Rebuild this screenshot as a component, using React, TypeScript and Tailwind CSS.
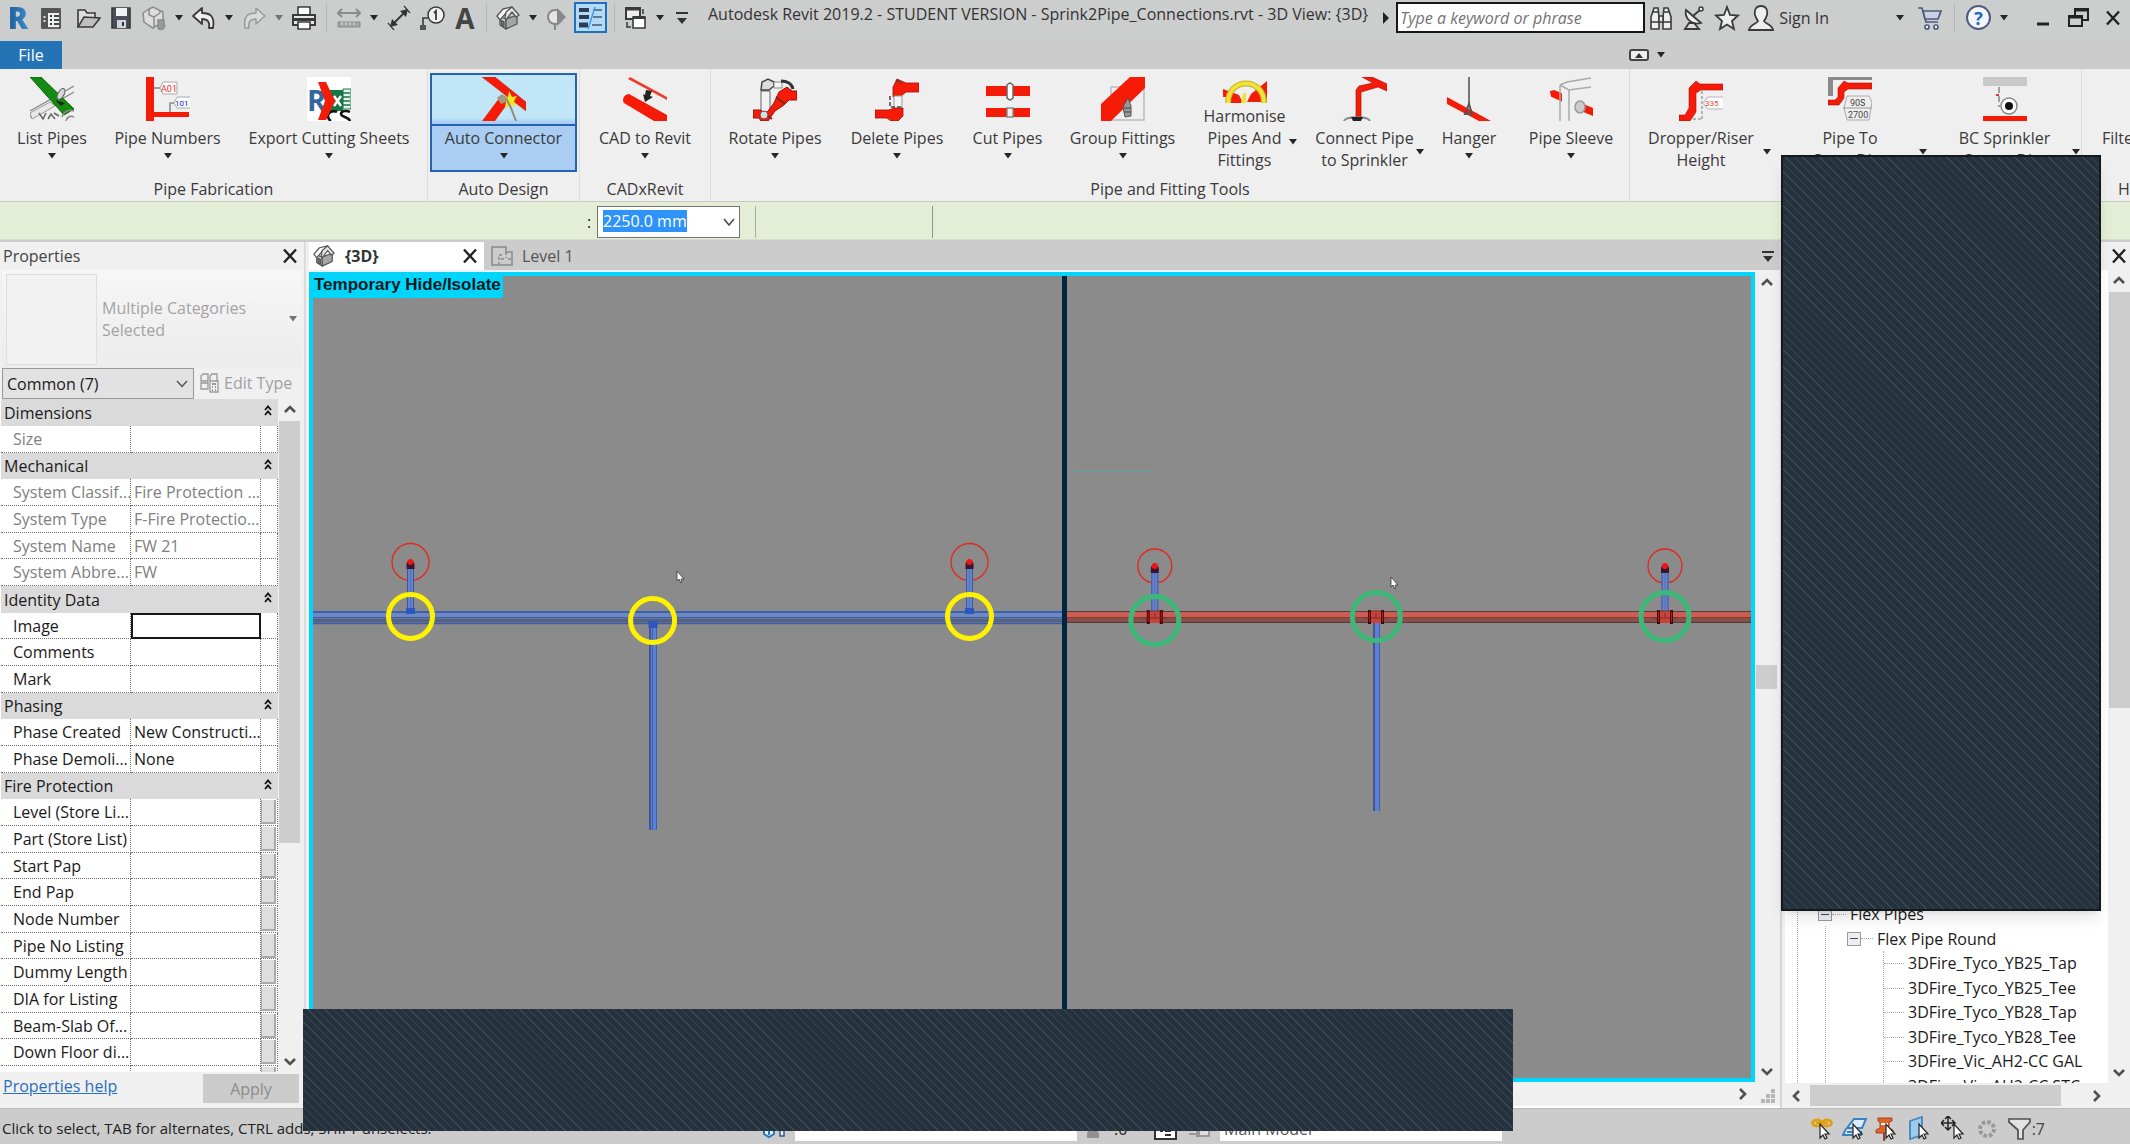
import type { ReactNode } from 'react';

const RED = '#f51b06';

function Caret({ dim = false }: { dim?: boolean }) {
  return (
    <svg width="10" height="6" viewBox="0 0 10 6" className={dim ? 'shrink-0 text-neutral-500' : 'shrink-0 text-neutral-800'}>
      <path d="M1 0h8L5 5.500z" fill="currentColor" />
    </svg>
  );
}

function CaretButton({ label, dim = false }: { label: string; dim?: boolean }) {
  return (
    <button type="button" aria-label={label} className="flex h-8 w-[10px] shrink-0 items-center justify-center">
      <Caret dim={dim} />
    </button>
  );
}

function Tool({ label, children, className = 'w-[26px]' }: { label: string; children: ReactNode; className?: string }) {
  return (
    <button type="button" aria-label={label} className={`flex h-8 shrink-0 items-center justify-center ${className}`}>
      <svg width="26" height="26" viewBox="0 0 26 26" fill="none" stroke="#3a3a3a" strokeWidth="2" className="shrink-0">
        {children}
      </svg>
    </button>
  );
}

function Chevron({ dir }: { dir: 'up' | 'down' | 'left' | 'right' }) {
  const d = { up: 'M2 9l5-5 5 5', down: 'M2 5l5 5 5-5', left: 'M9 2L4 7l5 5', right: 'M5 2l5 5-5 5' }[dir];
  return (
    <svg width="14" height="14" viewBox="0 0 14 14" fill="none" stroke="#505050" strokeWidth="2.600">
      <path d={d} />
    </svg>
  );
}

function ScrollButton({ dir, label }: { dir: 'up' | 'down' | 'left' | 'right'; label: string }) {
  return (
    <button type="button" aria-label={label} className="flex size-[22px] shrink-0 items-center justify-center">
      <Chevron dir={dir} />
    </button>
  );
}

function Cross({ label, className = '' }: { label: string; className?: string }) {
  return (
    <button type="button" aria-label={label} className={`flex size-5 shrink-0 items-center justify-center ${className}`}>
      <svg width="16" height="16" viewBox="0 0 16 16" fill="none" stroke="#222" strokeWidth="2.400">
        <path d="M2 1.500l12 13M14 1.500l-12 13" />
      </svg>
    </button>
  );
}

function House({ size = 24 }: { size?: number }) {
  return (
    <svg width={size} height={size} viewBox="0 0 24 24" stroke="#555" strokeWidth="1.300" strokeLinejoin="round" className="shrink-0">
      <path d="M4 11v8l6 4V13z" fill="#d2d2d2" />
      <path d="M10 13v10l11-5V9z" fill="#a5a5a5" />
      <path d="M1 10l6-7 9-2-6 6-6 7z" fill="#fafafa" />
      <path d="M10 6l6-5 7 8-3 2-4-5-6 8-1-2z" fill="#e4e4e4" />
      <path d="M5.500 14.500v5l2.500 1.500v-5.500z" fill="#777" />
    </svg>
  );
}

function TitleBar() {
  const sep = 'h-7 w-px shrink-0 bg-[#b5b5b5]';
  return (
    <header className="flex h-[41px] shrink-0 items-start bg-[#cccdcd] text-[16px] text-[#333]">
      <div className="flex h-[35px] shrink-0 items-center gap-[7px] pl-[5px]">
        <button type="button" aria-label="Revit menu" className="flex h-8 w-[26px] shrink-0 items-center justify-center">
          <span className="bg-linear-to-r from-[#1d5c9c] to-[#3d8ccb] bg-clip-text text-[30px] leading-8 font-extrabold text-transparent">R</span>
        </button>
        <Tool label="Home">
          <path d="M4 4h18v19H4z" fill="#eee" strokeWidth="1.600" />
          <path d="M4 3h18v5H4zM4 8h6v15H4z" fill="#555" stroke="none" />
          <path d="M12 11h2M12 15h2M12 19h2" stroke="#333" />
          <path d="M16 11h5M16 15h5M16 19h5" stroke="#444" />
          <path d="M5.500 12h2M5.500 16h2" stroke="#ddd" />
        </Tool>
        <Tool label="Open" className="ml-1 w-[26px]">
          <path d="M3 22V5h7l2 3h8v4" strokeWidth="1.600" fill="#ddd" />
          <path d="M3 22l6-10 16 1-7 9z" strokeWidth="1.600" fill="#bfbfbf" />
        </Tool>
        <Tool label="Save">
          <path d="M4 3h18v20H4z" fill="#4b4e57" strokeWidth="1.600" />
          <path d="M8 3h11v8H8z" fill="#f2f2f2" stroke="none" />
          <path d="M9 15h9v8H9z" fill="#cfd6e2" stroke="none" />
          <path d="M15 17v4" stroke="#333" />
        </Tool>
        <Tool label="Synchronize">
          <g stroke="#8c8c8c" strokeWidth="1.500" fill="#dcdcdc">
            <path d="M2 8l6-4 4-2 10 5v9l-10 7-9-6z" />
            <path d="M8 10l5 2 6-4M13 12v10M8 4v6M19 8V5" fill="none" />
            <path d="M17 15h6v4a3 3 0 01-6 4z" fill="#9a9a9a" />
          </g>
        </Tool>
        <CaretButton label="Synchronize options" />
        <Tool label="Undo">
          <path d="M2 11l9-8v5c8 0 13 3 11 15h-4c1-6-1-9-7-9v5z" fill="#eee" strokeWidth="1.800" strokeLinejoin="round" />
        </Tool>
        <CaretButton label="Undo list" />
        <Tool label="Redo">
          <path d="M24 11l-9-8v5C7 8 2 11 4 23h4c-1-6 1-9 7-9v5z" fill="#dadada" stroke="#999" strokeWidth="1.500" strokeLinejoin="round" />
        </Tool>
        <CaretButton label="Redo list" dim />
        <Tool label="Print">
          <path d="M7 9V2h12v7" fill="#fff" strokeWidth="1.600" />
          <path d="M2 10h22v10H2z" fill="#e8e8e8" />
          <path d="M2 14.500h22" strokeWidth="3" />
          <path d="M7 17h12v7H7z" fill="#fff" strokeWidth="1.600" />
        </Tool>
        <span className={`mx-[2px] ${sep}`} />
        <Tool label="Measure">
          <g stroke="#8b8b8b">
            <path d="M2 8h22M6 4L2 8l4 4M20 4l4 4-4 4" />
            <path d="M2 17h22v5H2z" fill="#a5a5a5" strokeWidth="1" />
            <path d="M6 17v3M10 17v3M14 17v3M18 17v3" stroke="#ddd" strokeWidth="1" />
          </g>
        </Tool>
        <CaretButton label="Measure options" />
        <Tool label="Aligned dimension">
          <path d="M6 20L20 6" />
          <path d="M4 22l2-8 6 6zM22 4l-2 8-6-6z" fill="#333" stroke="none" />
          <path d="M2 18l6 7M18 1l6 7" strokeWidth="1.200" />
        </Tool>
        <Tool label="Tag by category">
          <path d="M4 24V13h7" strokeWidth="1.600" />
          <path d="M1 20h6v5H1z" fill="#555" stroke="none" />
          <circle cx="17" cy="10" r="8" fill="#f0f0f0" strokeWidth="1.500" />
          <path d="M15 8l2-2v9" strokeWidth="1.800" />
        </Tool>
        <button type="button" aria-label="Text" className="flex h-8 w-[26px] shrink-0 items-center justify-center text-[28px] leading-8 font-bold text-[#444]">A</button>
        <span className={`mx-px ${sep}`} />
        <button type="button" aria-label="Default 3D view" className="flex h-8 w-[26px] shrink-0 items-center justify-center"><House /></button>
        <CaretButton label="3D view options" />
        <Tool label="Section" className="w-[22px]">
          <circle cx="12" cy="12" r="7" fill="#e5e5e5" stroke="#888" />
          <path d="M14 3l9 9-9 9V3z" fill="#888" stroke="none" />
          <path d="M12 19v6" stroke="#888" />
        </Tool>
        <button type="button" aria-label="Thin lines" aria-pressed="true" className="flex h-[31px] w-[33px] shrink-0 items-center justify-center border-2 border-[#1f6fc0] bg-[#b3dbf8]">
          <svg width="27" height="24" viewBox="0 0 27 24" fill="none">
            <path d="M2 4h10M2 11h10" stroke="#2d3d55" strokeWidth="4" />
            <path d="M2 19h9" stroke="#2d3d55" strokeWidth="5" />
            <path d="M16 4h9M16 11h9M15 19h10" stroke="#4a5a70" strokeWidth="1.500" />
            <path d="M18 1l-7 22" stroke="#3c9df0" strokeWidth="1.500" />
          </svg>
        </button>
        <span className={sep} />
        <Tool label="Switch windows">
          <path d="M4 3h14v11H4z" fill="#eee" />
          <path d="M4 4h14" strokeWidth="3" />
          <path d="M11 12h12v11H11z" fill="#fff" strokeWidth="1.600" />
          <path d="M11 12.500h12" strokeWidth="3" />
          <path d="M5 17v5h4M21 9V5h-1" strokeWidth="1.500" />
        </Tool>
        <CaretButton label="Window list" />
        <button type="button" aria-label="Customize toolbar" className="ml-1 flex h-8 w-3 shrink-0 items-center">
          <svg width="12" height="14" viewBox="0 0 12 14" fill="#333"><path d="M0 1h12v2H0zM1 7h10l-5 6z" /></svg>
        </button>
      </div>
      <h1 className="h-[35px] min-w-0 flex-1 truncate pt-[2px] pl-5 text-[16px] leading-6">
        Autodesk Revit 2019.2 - STUDENT VERSION - Sprink2Pipe_Connections.rvt - 3D View: {'{3D}'}
      </h1>
      <div className="flex h-[35px] shrink-0 items-center pr-[7px]">
        <svg width="7" height="12" viewBox="0 0 7 12" className="mr-[7px]"><path d="M1 0v12l6-6z" fill="#222" /></svg>
        <input
          aria-label="Search"
          placeholder="Type a keyword or phrase"
          className="h-[31px] w-[249px] border-2 border-neutral-900 bg-white px-[2px] text-[16px] italic placeholder:text-neutral-500"
        />
        <div className="ml-[3px] flex items-center gap-[7px]">
          <Tool label="Find">
            <g fill="#eee" strokeWidth="1.600">
              <path d="M3 12l3-9h4l1 9v12H3zM15 12l1-9h4l3 9v12h-8z" />
              <path d="M11 11h4v6h-4zM3 17h8M15 17h8M5 7h5M16 7h5" />
            </g>
          </Tool>
          <Tool label="Communication center">
            <path d="M5 5c-2 8 6 16 15 13z" fill="#eee" strokeWidth="1.800" />
            <path d="M12 11l8-7M4 24h14l-5-6-5 0z" strokeWidth="1.800" fill="#ddd" />
            <circle cx="20" cy="4" r="2" fill="#eee" strokeWidth="1.500" />
          </Tool>
          <Tool label="Favorites">
            <path d="M13 2l3 8 8 .500-6 5.500 2 8-7-4.500L6 24l2-8-6-5.500L10 10z" fill="#eee" strokeWidth="1.800" />
          </Tool>
        </div>
        <button type="button" className="ml-2 flex items-center gap-[5px] text-[16px]">
          <svg width="26" height="28" viewBox="0 0 26 28" fill="#eee" stroke="#3a3a3a" strokeWidth="1.800">
            <path d="M13 2c5 0 7 4 6 9-1 3-2 5-3 6 1 3 8 3 9 9H1c1-6 8-6 9-9-1-1-2-3-3-6-1-5 1-9 6-9z" />
          </svg>
          Sign In
        </button>
        <span className="w-[66px]" />
        <CaretButton label="Account options" />
        <Tool label="App store" className="ml-3 w-[26px]">
          <g stroke="#4d5a80" strokeWidth="1.700">
            <path d="M1 3h4l4 14h12" />
            <path d="M6 6h18l-3 8H8z" fill="#c9d0e2" />
            <circle cx="10" cy="22" r="2" fill="#fff" />
            <circle cx="19" cy="22" r="2" fill="#fff" />
          </g>
        </Tool>
        <span className={`mx-[11px] ${sep}`} />
        <button type="button" aria-label="Help" className="flex size-[25px] shrink-0 items-center justify-center rounded-full border-2 border-[#50597a] bg-[#f2f5fa] text-[18px] leading-5 font-bold text-[#2364c4]">?</button>
        <span className="w-2" />
        <CaretButton label="Help options" />
        <Tool label="Minimize" className="ml-[21px] w-[26px]"><path d="M7 19h12" stroke="#222" strokeWidth="3" /></Tool>
        <Tool label="Restore" className="ml-[9px] w-[26px]">
          <path d="M10 10V4h13v11h-5" stroke="#222" /><path d="M9 5h15" stroke="#222" strokeWidth="3" />
          <path d="M4 11h13v10H4z" stroke="#222" /><path d="M3 12h15" stroke="#222" strokeWidth="3" />
        </Tool>
        <Cross label="Close" className="ml-3" />
      </div>
    </header>
  );
}

function TabRow() {
  return (
    <nav className="flex h-7 shrink-0 bg-[#cccccc]">
      <button type="button" className="w-[62px] bg-[#2474b5] text-[16px] text-white">File</button>
      <div className="ml-auto mr-[464px] flex items-center gap-[7px]">
        <button type="button" aria-label="Minimize ribbon" className="flex h-3 w-5 items-center justify-center rounded-[3px] border-2 border-[#444] bg-[#eee]">
          <svg width="8" height="5" viewBox="0 0 8 5"><path d="M0 5h8L4 0z" fill="#333" /></svg>
        </button>
        <CaretButton label="Ribbon options" />
      </div>
    </nav>
  );
}

const icons: Record<string, ReactNode> = {
  list: (
    <g>
      <path d="M0 34L44 9M0 40L44 15" stroke="#888" strokeWidth="1.200" />
      <path d="M0 36l20-11 5 4L2 42z" fill="#e8e8e8" stroke="#999" />
      <path d="M0 0h11l33 32-10 6z" fill="#158a12" stroke="#0b6a0a" />
      <ellipse cx="31" cy="17" rx="3" ry="6" fill="#d6d6d6" stroke="#555" transform="rotate(30 31 17)" />
      <path d="M25 23l6 6 4-3z" fill="#1a2a1a" />
      <path d="M32 40c2-6 7-8 12-6M36 44c1-4 4-6 8-4" fill="none" stroke="#888" strokeWidth="1.500" />
      <path d="M9 36l4 6 3-6M18 42l3-5 4 5M24 36l5 3" fill="none" stroke="#666" strokeWidth="1.500" />
    </g>
  ),
  numbers: (
    <g>
      <path d="M0 0h8v44H0z" fill={RED} />
      <path d="M8 35h35v5H8z" fill={RED} />
      <path d="M8 11h6M24 35V26h4" stroke="#888" fill="none" strokeWidth="1.500" />
      <path d="M14 11l3-6h14v12H17z" fill="#fafafa" stroke="#aaa" />
      <path d="M44 20H31l-3 6 3 5h13" fill="#fafafa" stroke="#aaa" />
      <text x="15" y="15" fontSize="9" fill="#e33" fontFamily="Roboto, sans-serif">A01</text>
      <text x="29" y="29" fontSize="8" fill="#22c" fontFamily="Roboto, sans-serif">101</text>
    </g>
  ),
  export: (
    <g>
      <path d="M0 0h44v44H0z" fill="#fff" />
      <path d="M22 13h14v21H22z" fill="#16774a" />
      <path d="M36 12h8v20h-8z" fill="#e6f1ea" stroke="#16774a" />
      <path d="M36 16h7M36 20h7M36 24h7M36 28h7" stroke="#16774a" strokeWidth="1.500" />
      <path d="M27 19l7 10M34 19l-7 10" stroke="#fff" strokeWidth="2.500" />
      <text x="0" y="34" fontSize="29" fontWeight="700" fill="#3267a0" fontFamily="Open Sans, sans-serif">R</text>
      <path d="M30 35c-4-2-9 0-9 4 0 2 1 4 3 5M43 35c-4-2-9-1-9 2s8 3 9 7" fill="none" stroke="#111" strokeWidth="2.500" />
      <path d="M11 5h8l9 19-9 19h-8l7-19z" fill={RED} />
    </g>
  ),
  auto: (
    <g>
      <path d="M0 0h13l31 25v9z" fill={RED} stroke="#a31" strokeWidth=".500" />
      <path d="M0 44l18-24 8 6-13 18z" fill={RED} />
      <path d="M27 14l3 6 5-1-3 5 2 6-6-2-5 3 1-7-4-3 6-1z" fill="#f6e71e" />
      <path d="M19 18l5 3 5 10 5 13" fill="none" stroke="#987" strokeWidth="2" />
      <path d="M15 21c3-4 8-4 9 0s-2 5-5 6z" fill="#a49a82" />
    </g>
  ),
  cad: (
    <g>
      <path d="M7 0l37 20v3L5 2z" fill="#f03a2a" />
      <path d="M6 17c-6 1-7 6-5 9l30 18h13v-6z" fill={RED} />
      <path d="M23 13l6 1-2 5 3 1-8 5-2-8 2 1z" fill="#222" />
    </g>
  ),
  rotate: (
    <g>
      <path d="M8 14h9v22H8z" fill="#f1f1f1" stroke="#666" />
      <path d="M9 5l6-3 6 3v4l-5 4h-8z" fill="#ddd" stroke="#444" strokeWidth="1.500" />
      <path d="M21 5h8v6h-8z" fill="#f5f5f5" stroke="#888" />
      <path d="M28 4c6 0 11 3 12 8" fill="none" stroke="#333" strokeWidth="3" />
      <path d="M0 33h8l4 5 9-12 5-11 8-5 5 4h5v9h-8l-5 5-9 6-7 10H8l-2-3H0z" fill={RED} stroke="#911" />
      <path d="M23 20l9 7M11 36l8 6" stroke="#822" strokeWidth="2" />
      <circle cx="11" cy="38" r="4" fill="#ddd" stroke="#744" />
    </g>
  ),
  remove: (
    <g>
      <path d="M22 2l9 4h13v9H31l-6 5h-7V10z" fill={RED} stroke="#911" strokeWidth=".800" />
      <path d="M19 19h8v13h-8z" fill="#f4f4f4" stroke="#999" />
      <path d="M19 31h9v8l-5 5h-7l-4-3H0v-8h14z" fill={RED} stroke="#911" strokeWidth=".800" />
      <path d="M15 19v11M21 3l6 4M16 30h12" stroke="#444" strokeWidth="1.500" strokeDasharray="4 2" />
    </g>
  ),
  cut: (
    <g>
      <path d="M0 9h44v10H0zM0 31h44v9H0z" fill={RED} />
      <path d="M21 8l3-2 3 2v13l-3 2-3-2z" fill="#fff" stroke="#666" strokeWidth="1.500" />
      <path d="M21 31h6v9h-6z" fill="#eee" stroke="#888" strokeWidth="1.500" />
    </g>
  ),
  group: (
    <g>
      <path d="M10 10h33v33H10z" fill="none" stroke="#bbb" strokeWidth="1.500" />
      <path d="M29 0h15v11L10 44H0V27z" fill={RED} />
      <path d="M22 30l5-9 3 8v10l-6 1z" fill="#999" stroke="#555" />
      <path d="M23 31h7M23 35h7" stroke="#444" />
    </g>
  ),
  harmonise: (
    <g>
      <path d="M0 10l16 6 4 8H3V18H0zM44 2v21H24l4-8z" fill={RED} />
      <path d="M5 24c0-26 36-26 36 0" fill="none" stroke="#c9b92c" strokeWidth="6" />
      <path d="M5 24c0-26 36-26 36 0" fill="none" stroke="#f2e33a" strokeWidth="3.500" />
      <path d="M20 14h3v10h-5z" fill="#f0e13a" />
    </g>
  ),
  connect: (
    <g>
      <path d="M19 0h10l15 7v7l-9-4-17 5v26h-5V13l3-4 14-3z" fill={RED} stroke="#a11" strokeWidth=".700" />
      <path d="M1 44c2-5 24-5 26 0" fill="none" stroke="#888" strokeWidth="2" />
      <path d="M8 40h12l-2 4h-8z" fill="#222" />
    </g>
  ),
  hanger: (
    <g>
      <path d="M0 20l44 24H32L0 27z" fill={RED} />
      <path d="M22 0v27" stroke="#777" strokeWidth="2" />
      <path d="M22 27l-4 10h7z" fill="none" stroke="#555" strokeWidth="2" />
    </g>
  ),
  sleeve: (
    <g>
      <path d="M2 15l3-1 7 3v6L3 19z" fill={RED} stroke={RED} strokeWidth="2" />
      <path d="M11 44V8M20 44V13M11 8l9 5 22-3M11 8l7-3 24-4" fill="none" stroke="#aaa" strokeWidth="1.500" />
      <path d="M32 26l12 5v8l-12-5z" fill={RED} />
      <ellipse cx="31" cy="30" rx="5" ry="6" fill="#ccc" stroke="#999" strokeWidth="1.500" />
    </g>
  ),
  dropper: (
    <g>
      <path d="M44 7H21l-4-3-7 7v20l-4 7H0v6h11l6-9V16l5-3h22z" fill={RED} stroke="#a11" strokeWidth=".600" />
      <path d="M23 14v28M14 42h10" stroke="#777" strokeDasharray="3 2" />
      <path d="M44 20H29l-5 6 5 6h15" fill="#fff" stroke="#ccc" strokeWidth="1.500" />
      <text x="26" y="29" fontSize="8" fill="#e44" fontFamily="Roboto, sans-serif">335</text>
    </g>
  ),
  pipeto: (
    <g>
      <path d="M0 0h44v3H5v16H0z" fill="#8a8a8a" />
      <path d="M44 6H20l-4-2-6 7v9l-3 3H0v5h11l5-7v-6l4-3h24z" fill={RED} stroke="#a11" strokeWidth=".600" />
      <path d="M19 19h22l3 6-3 18H19l-3-12z" fill="#eee" stroke="#aaa" />
      <path d="M15 31h29" stroke="#999" />
      <text x="22" y="29" fontSize="9" fill="#444" fontFamily="Roboto, sans-serif">90S</text>
      <text x="20" y="41" fontSize="9" fill="#444" fontFamily="Roboto, sans-serif">2700</text>
    </g>
  ),
  sprinkler: (
    <g>
      <path d="M0 0h44v9H0z" fill="#c9c9c9" />
      <path d="M0 39h44v5H0z" fill={RED} />
      <path d="M16 10v20" stroke="#555" strokeDasharray="6 3" />
      <path d="M13 18h3" stroke="#e33" strokeWidth="2" />
      <circle cx="26" cy="29" r="8" fill="#fff" stroke="#888" strokeWidth="1.500" />
      <circle cx="26" cy="29" r="4" fill="#111" />
    </g>
  ),
};

type RibbonItem = { icon: string; lines: string[]; width: string; side?: boolean; active?: boolean };
type RibbonGroup = { title: string; items: RibbonItem[] };

const ribbon: RibbonGroup[] = [
  {
    title: 'Pipe Fabrication',
    items: [
      { icon: 'list', lines: ['List Pipes'], width: 'w-[104px]' },
      { icon: 'numbers', lines: ['Pipe Numbers'], width: 'w-[127px]' },
      { icon: 'export', lines: ['Export Cutting Sheets'], width: 'w-[196px]' },
    ],
  },
  { title: 'Auto Design', items: [{ icon: 'auto', lines: ['Auto Connector'], width: 'w-[151px]', active: true }] },
  { title: 'CADxRevit', items: [{ icon: 'cad', lines: ['CAD to Revit'], width: 'w-[130px]' }] },
  {
    title: 'Pipe and Fitting Tools',
    items: [
      { icon: 'rotate', lines: ['Rotate Pipes'], width: 'w-[128px]' },
      { icon: 'remove', lines: ['Delete Pipes'], width: 'w-[116px]' },
      { icon: 'cut', lines: ['Cut Pipes'], width: 'w-[105px]' },
      { icon: 'group', lines: ['Group Fittings'], width: 'w-[125px]' },
      { icon: 'harmonise', lines: ['Harmonise', 'Pipes And', 'Fittings'], width: 'w-[119px]', side: true },
      { icon: 'connect', lines: ['Connect Pipe', 'to Sprinkler'], width: 'w-[121px]', side: true },
      { icon: 'hanger', lines: ['Hanger'], width: 'w-[88px]' },
      { icon: 'sleeve', lines: ['Pipe Sleeve'], width: 'w-[116px]' },
    ],
  },
  {
    title: '',
    items: [
      { icon: 'dropper', lines: ['Dropper/Riser', 'Height'], width: 'w-[142px]', side: true },
      { icon: 'pipeto', lines: ['Pipe To', 'Story Dim'], width: 'w-[156px]', side: true },
      { icon: 'sprinkler', lines: ['BC Sprinkler', 'Centre Dim'], width: 'w-[153px]', side: true },
    ],
  },
];

function RibbonButton({ item }: { item: RibbonItem }) {
  const three = item.lines.length === 3;
  return (
    <div className={`flex h-[103px] shrink-0 px-[2px] pt-1 ${item.width}`}>
      <button
        type="button"
        className={
          item.active
            ? 'relative flex w-full flex-col items-center border-2 border-[#2563b0] bg-linear-to-b from-[#c0e6f8] from-45% to-[#a9cdf3] to-50%'
            : 'relative flex w-full flex-col items-center border-2 border-transparent'
        }
      >
        {item.active && <span className="absolute inset-x-0 top-[49px] h-[2px] bg-[#2563b0]" />}
        <svg
          width="44"
          height={three ? 26 : 44}
          viewBox={three ? '0 0 44 26' : '0 0 44 44'}
          className={three ? 'mt-1 shrink-0 overflow-hidden' : 'mt-[2px] mb-[6px] shrink-0 overflow-hidden'}
        >
          {icons[item.icon]}
        </svg>
        <span className="flex flex-col leading-[22px]">
          {item.lines.map((l) => (
            <span key={l} className="whitespace-nowrap">{l}</span>
          ))}
        </span>
        {item.side ? (
          <span className={three ? 'absolute top-[64px] right-[2px] flex' : 'absolute top-[74px] -right-1 flex'}><Caret /></span>
        ) : (
          <span className="mt-1 flex"><Caret /></span>
        )}
      </button>
    </div>
  );
}

function Ribbon() {
  return (
    <section aria-label="Ribbon" className="flex h-[133px] shrink-0 overflow-hidden border-b border-[#c6ccbf] bg-[#efefef] text-[16px] text-[#3a3a3a]">
      {ribbon.map((g, i) => (
        <div key={i} className="flex shrink-0 flex-col border-r border-[#dcdcdc]">
          <div className="flex">
            {g.items.map((item) => <RibbonButton key={item.icon} item={item} />)}
          </div>
          <div className="mt-[6px] text-center leading-[22px]">{g.title}</div>
        </div>
      ))}
      <div className="flex flex-1 flex-col pl-5">
        <button type="button" className="mt-[58px] text-left leading-[22px] whitespace-nowrap">Filter</button>
        <div className="mt-[29px] pl-4 leading-[22px] whitespace-nowrap">Help</div>
      </div>
    </section>
  );
}

function OptionsBar() {
  return (
    <section aria-label="Options" className="flex h-[38px] shrink-0 items-center border-b border-[#d8ddd0] bg-[#e4eed6] pt-[3px]">
      <label htmlFor="offset" className="ml-[587px] w-[10px] text-[16px] text-neutral-900">:</label>
      <div className="flex h-8 w-[143px] items-start border border-neutral-500 bg-white pt-[3px] pl-[5px]">
        <input id="offset" defaultValue="2250.0 mm" className="h-[22px] w-[84px] shrink-0 bg-[#2d93f8] text-[16px] text-white" />
        <button type="button" aria-label="Offset list" className="mt-1 mr-[2px] ml-auto flex size-4 items-center justify-center">
          <svg width="12" height="8" viewBox="0 0 12 8" fill="none" stroke="#444" strokeWidth="1.500"><path d="M1 1l5 6 5-6" /></svg>
        </button>
      </div>
      <span className="ml-[15px] h-8 w-px bg-[#a8b09c]" />
      <span className="ml-44 h-8 w-px bg-[#8f9684]" />
    </section>
  );
}

type Row = { name: string; value?: string; head?: boolean; grey?: boolean; button?: boolean; focus?: boolean };

const rows: Row[] = [
  { name: 'Dimensions', head: true },
  { name: 'Size', grey: true },
  { name: 'Mechanical', head: true },
  { name: 'System Classif...', value: 'Fire Protection ...', grey: true },
  { name: 'System Type', value: 'F-Fire Protectio...', grey: true },
  { name: 'System Name', value: 'FW 21', grey: true },
  { name: 'System Abbre...', value: 'FW', grey: true },
  { name: 'Identity Data', head: true },
  { name: 'Image', focus: true },
  { name: 'Comments' },
  { name: 'Mark' },
  { name: 'Phasing', head: true },
  { name: 'Phase Created', value: 'New Constructi...' },
  { name: 'Phase Demoli...', value: 'None' },
  { name: 'Fire Protection', head: true },
  { name: 'Level (Store Li...', button: true },
  { name: 'Part (Store List)', button: true },
  { name: 'Start Pap', button: true },
  { name: 'End Pap', button: true },
  { name: 'Node Number', button: true },
  { name: 'Pipe No Listing', button: true },
  { name: 'Dummy Length', button: true },
  { name: 'DIA for Listing', button: true },
  { name: 'Beam-Slab Of...', button: true },
  { name: 'Down Floor di...', button: true },
  { name: '', button: true },
];

function PropertyRow({ row }: { row: Row }) {
  const height = 'h-[27px] nth-[3n]:h-[26px]';
  if (row.head) {
    return (
      <tr className={`bg-[#dadada] ${height}`}>
        <th colSpan={3} scope="colgroup" className="p-0 pl-[3px] text-left font-normal">
          <span className="flex items-center justify-between pr-[6px] leading-[22px]">
            {row.name}
            <svg width="8" height="11" viewBox="0 0 8 11" fill="none" stroke="#111" strokeWidth="1.800" className="mb-1">
              <path d="M1 5l3-3.500L7 5M1 10l3-3.500L7 10" />
            </svg>
          </span>
        </th>
      </tr>
    );
  }
  const cell = 'overflow-hidden border-r border-b border-dotted border-neutral-500 p-0 text-left font-normal whitespace-nowrap leading-[22px]';
  const tone = row.grey ? 'text-[#808080]' : 'text-[#1a1a1a]';
  return (
    <tr className={`bg-white ${height} ${tone}`}>
      <th scope="row" className={`pl-3 ${cell}`}>{row.name}</th>
      <td className={row.focus ? 'border-2 border-neutral-900 p-0 leading-[22px]' : cell}>
        <span className="pl-[3px]">{row.value}</span>
      </td>
      <td className={cell}>
        {row.button && (
          <button type="button" aria-label={`Associate ${row.name}`} className="block h-[24px] w-[15px] border-r-2 border-b-2 border-l border-[#aaa] bg-[#dedede]" />
        )}
      </td>
    </tr>
  );
}

function Properties() {
  return (
    <aside className="flex w-[306px] shrink-0 flex-col border-r-2 border-[#dcdcdc] bg-[#f0f0f0] text-[16px] text-[#1a1a1a]">
      <div className="flex h-7 shrink-0 items-center justify-between pr-1 pl-[3px] text-[#444]">
        <h2>Properties</h2>
        <Cross label="Close properties" />
      </div>
      <button type="button" className="mx-[2px] flex h-[98px] shrink-0 items-center bg-linear-to-b from-[#f6f6f6] to-[#ececec] pr-[4px] pl-1 text-left text-[#a3a3a3]">
        <span className="size-[91px] shrink-0 border border-[#dedede] bg-[#f2f2f2]" />
        <span className="ml-[5px] flex-1 leading-[22px]">Multiple Categories<br />Selected</span>
        <Caret dim />
      </button>
      <div className="flex h-[31px] shrink-0 items-center pl-[2px]">
        <div className="relative flex h-[31px] w-[192px]">
          <select aria-label="Filter" className="w-full appearance-none border border-[#999] bg-[#e2e2e2] pl-1">
            <option>Common (7)</option>
          </select>
          <svg width="12" height="8" viewBox="0 0 12 8" fill="none" stroke="#555" strokeWidth="1.500" className="pointer-events-none absolute top-3 right-[6px]"><path d="M1 1l5 5.500L11 1" /></svg>
        </div>
        <button type="button" className="ml-[6px] flex items-center gap-1 pb-[2px] text-[#a0a0a0]">
          <svg width="20" height="20" viewBox="0 0 20 20" fill="none" stroke="#999" strokeWidth="1.300">
            <path d="M1 3l2-2h5v7H1zM10 3l2-2h5v7h-7zM1 10h7v6H1zM10 8h8v11h-8z" />
            <path d="M12 11h4M12 14h1M15 14h1M12 17h1M15 17h1" strokeWidth="1.800" />
          </svg>
          Edit Type
        </button>
      </div>
      <div className="flex h-[673px] shrink-0">
        <div className="w-[278px] overflow-hidden bg-white pl-px">
          <table className="w-full table-fixed border-separate border-spacing-0">
            <colgroup>
              <col className="w-[130px]" />
              <col className="w-[130px]" />
              <col />
            </colgroup>
            <tbody>
              {rows.map((r, i) => <PropertyRow key={i} row={r} />)}
            </tbody>
          </table>
        </div>
        <div className="flex w-[23px] flex-col items-center">
          <ScrollButton dir="up" label="Scroll up" />
          <div className="h-[422px] w-[21px] bg-[#cdcdcd]" />
          <span className="flex-1" />
          <ScrollButton dir="down" label="Scroll down" />
        </div>
      </div>
      <div className="flex h-[38px] shrink-0 items-start justify-between pt-[2px] pr-[5px] pl-[3px]">
        <a href="#help" className="text-[#2a6fc0] underline">Properties help</a>
        <button type="button" disabled className="h-[29px] w-24 bg-[#cbcbcb] text-[#8c8c8c]">Apply</button>
      </div>
    </aside>
  );
}

function Cursor({ x, y }: { x: number; y: number }) {
  return <path transform={`translate(${x} ${y})`} d="M0 0v10l2-2 2 4 1-1-1-3h3z" fill="#fff" stroke="#333" strokeWidth=".800" />;
}

function Riser({ x, head, base, r }: { x: number; head: number; base: number; r: number }) {
  return (
    <g>
      <circle cx={x} cy={head} r={r} fill="none" stroke="#e3271c" strokeWidth="1.300" />
      <path d={`M${x - 3.5} ${head + 4}h7V${base}h-7z`} fill="#6884c9" />
      <path d={`M${x - 3} ${head + 4}V${base}M${x + 3} ${head + 4}V${base}`} stroke="#3a57a3" />
      <path d={`M${x} ${head + 4}V${base}`} stroke="#4766b4" strokeWidth=".700" />
      <path d={`M${x - 4} ${head + 7}v-4a4 5 0 018 0v4z`} fill="#3a1530" />
      <circle cx={x} cy={head} r="3" fill="#f31312" />
    </g>
  );
}

function Tee({ x }: { x: number }) {
  return (
    <g>
      <path d={`M${x - 7} 611h14v12h-14z`} fill="#c4453c" />
      <path d={`M${x - 6.5} 610v14M${x + 6.5} 610v14`} stroke="#3a0808" strokeWidth="3" />
      <path d={`M${x - 6.5} 612v10M${x + 6.5} 612v10`} stroke="#c01818" />
      <path d={`M${x - 7} 611h14M${x - 12} 618h24M${x} 613v5`} stroke="#7a2420" strokeWidth=".800" />
    </g>
  );
}

function ModelView() {
  return (
    <div className="relative min-h-0 flex-1 overflow-hidden border-4 border-[#00d5fc] bg-[#8b8b8b]">
      <svg className="absolute inset-0 size-full" viewBox="313 276 1438 802" preserveAspectRatio="xMidYMid slice">
        <path d="M1073 470.500h80" stroke="#5fa3a3" />
        <path d="M300 611h765v13H300z" fill="#6f88bd" />
        <path d="M300 612h765" stroke="#3c60b4" strokeWidth="2" />
        <path d="M300 617.500h765" stroke="#3c60b4" strokeWidth="1.200" />
        <path d="M300 620.500h765" stroke="#56627e" strokeWidth="4" />
        <path d="M300 623.500h765" stroke="#3f5ca5" strokeWidth="1.500" />
        <path d="M1065 611h700v12h-700z" fill="#c95f54" />
        <path d="M1065 620h700" stroke="#85504a" strokeWidth="4" />
        <path d="M1065 611.500h700M1065 622.500h700" stroke="#5a3a36" />
        <path d="M1065 617.500h700" stroke="#9c352d" />
        <path d="M649 622h8v208h-8z" fill="#5b80d6" />
        <path d="M650 622v208" stroke="#41588f" strokeWidth="2" />
        <path d="M652.500 622v208M656.500 622v208" stroke="#3c60b4" />
        <path d="M648.500 621h9v7h-9z" fill="#2c56c0" />
        <path d="M1373 623h7v188h-7z" fill="#5b80d6" />
        <path d="M1374 623v188" stroke="#41588f" strokeWidth="2" />
        <path d="M1379.500 623v188" stroke="#3c60b4" />
        <Riser x={410.5} head={562} base={613} r={18.5} />
        <Riser x={969.5} head={562} base={613} r={18.5} />
        <Riser x={1154.8} head={566} base={611} r={17} />
        <Riser x={1665} head={566} base={611} r={17} />
        <path d="M406 608h9v6h-9zM965 608h9v6h-9z" fill="#2c56c0" />
        <Tee x={1154.8} />
        <Tee x={1376} />
        <Tee x={1665} />
        <g fill="none" strokeWidth="5">
          <g stroke="#fff200">
            <circle cx="410.500" cy="616.500" r="22" />
            <circle cx="652.600" cy="620.500" r="22" />
            <circle cx="969.500" cy="616.500" r="22" />
          </g>
          <g stroke="#3cb878">
            <circle cx="1154.800" cy="620.500" r="24" />
            <circle cx="1376.300" cy="616.500" r="24" />
            <circle cx="1665" cy="616.500" r="24" />
          </g>
        </g>
        <path d="M1062 270h5v820h-5z" fill="#00263f" />
        <Cursor x={677} y={571} />
        <Cursor x={1391} y={577} />
      </svg>
      <span className="absolute top-0 left-0 h-[22px] bg-[#00d5fc] pr-[2px] pl-px font-['Liberation_Sans',sans-serif] text-[17px] leading-[18px] font-bold text-[#0c1a20]">
        Temporary Hide/Isolate
      </span>
    </div>
  );
}

function Center() {
  return (
    <main className="flex min-w-0 flex-1 flex-col bg-[#f0f0f0] pl-[3px]">
      <div className="flex h-7 shrink-0 items-stretch bg-[#cccccc] text-[16px]">
        <div className="flex w-[175px] items-center bg-white pr-1 pl-1">
          <House size={22} />
          <button type="button" className="ml-[10px] font-bold text-[#333]">{'{3D}'}</button>
          <Cross label="Close 3D view" className="ml-auto" />
        </div>
        <button type="button" className="ml-[7px] flex items-center gap-[9px] text-[#555]">
          <svg width="22" height="20" viewBox="0 0 22 20" fill="none" stroke="#8a8a8a" strokeWidth="1.500">
            <path d="M1 1h14v5h6v13H1z" /><path d="M8 19V9h4M15 6v6M10 13h3M17 13h4" strokeDasharray="3 2" />
          </svg>
          Level 1
        </button>
        <button type="button" aria-label="View list" className="mr-[6px] ml-auto flex items-center">
          <svg width="12" height="11" viewBox="0 0 12 11" fill="#333"><path d="M0 0h12v2H0zM1 5h10l-5 6z" /></svg>
        </button>
      </div>
      <div className="mt-[2px] flex min-h-0 flex-1">
        <ModelView />
        <div className="flex w-[25px] shrink-0 flex-col items-center pr-[2px]">
          <ScrollButton dir="up" label="Scroll view up" />
          <span className="flex-1" />
          <span className="h-6 w-[21px] bg-[#cdcdcd]" />
          <span className="flex-1" />
          <ScrollButton dir="down" label="Scroll view down" />
        </div>
      </div>
      <div className="flex h-[26px] shrink-0 items-center justify-end border-b-2 border-white">
        <ScrollButton dir="right" label="Scroll view right" />
        <svg width="14" height="14" viewBox="0 0 14 14" fill="#b5b5b5" className="mt-1 mr-[5px] ml-2">
          <path d="M10 0h4v4h-4zM5 5h4v4H5zM10 5h4v4h-4zM0 10h4v4H0zM5 10h4v4H5zM10 10h4v4h-4z" />
        </svg>
      </div>
    </main>
  );
}

const families = ['3DFire_Tyco_YB25_Tap', '3DFire_Tyco_YB25_Tee', '3DFire_Tyco_YB28_Tap', '3DFire_Tyco_YB28_Tee', '3DFire_Vic_AH2-CC GAL', '3DFire_Vic_AH2-CC STC'];

function Toggle({ label }: { label: string }) {
  return (
    <button type="button" aria-label={label} className="flex size-[14px] shrink-0 items-center justify-center border border-[#999] bg-[#eee]">
      <span className="h-px w-2 bg-[#334a80]" />
    </button>
  );
}

function Browser() {
  const dots = 'border-dotted border-[#aaa]';
  return (
    <aside className="flex w-[350px] shrink-0 flex-col border-l-2 border-[#d5d5d5] bg-[#f0f0f0] text-[16px] text-[#1a1a1a]">
      <div className="flex h-7 shrink-0 items-center justify-end pr-px"><Cross label="Close browser" /></div>
      <div className="flex min-h-0 flex-1">
        <div className="ml-[3px] flex flex-1 items-stretch overflow-hidden bg-white pl-3">
          <span className={`w-7 shrink-0 border-l ${dots}`} />
          <ul className="flex flex-1 flex-col justify-end whitespace-nowrap">
            <li className="-ml-[7px] flex h-6 items-center"><Toggle label="Collapse Flex Pipes" /><span className={`mr-1 w-[14px] border-t ${dots}`} />Flex Pipes</li>
            <li className={`border-l ${dots}`}>
              <div className="ml-[21px] flex h-[25px] items-center"><Toggle label="Collapse Flex Pipe Round" /><span className={`mr-1 w-3 border-t ${dots}`} />Flex Pipe Round</div>
              <ul className={`ml-[57px] border-l ${dots}`}>
                {families.map((f, i) => (
                  <li
                    key={f}
                    className={i === families.length - 1 ? 'flex h-[9px] items-start overflow-hidden leading-6' : 'flex h-[25px] items-start overflow-hidden leading-6 even:h-6'}
                  >
                    <span className={`mt-3 mr-1 w-5 border-t ${dots}`} />{f}
                  </li>
                ))}
              </ul>
            </li>
          </ul>
        </div>
        <div className="flex w-[22px] shrink-0 flex-col items-center">
          <ScrollButton dir="up" label="Scroll browser up" />
          <span className="h-[416px] w-[21px] bg-[#cdcdcd]" />
          <span className="flex-1" />
          <ScrollButton dir="down" label="Scroll browser down" />
        </div>
      </div>
      <div className="flex h-[25px] shrink-0 items-center pr-[23px] pl-1">
        <ScrollButton dir="left" label="Scroll browser left" />
        <span className="mx-[2px] h-[21px] w-[251px] bg-[#cdcdcd]" />
        <span className="flex-1" />
        <ScrollButton dir="right" label="Scroll browser right" />
      </div>
    </aside>
  );
}

const arrow = <path d="M11 8v14l3-3 2 4 2-1-2-4h4z" fill="#fff" stroke="#222" strokeWidth="1.200" />;

function StatusBar() {
  const hidden = 'h-6 w-[282px] shrink-0 appearance-none bg-white pl-1 text-left text-[#555]';
  return (
    <footer className="flex h-9 shrink-0 items-center border-t border-[#bbb] bg-[#cccccc] pt-1 text-[16px] text-[#222]">
      <p className="w-[763px] shrink-0 pl-[2px] text-[15px]">Click to select, TAB for alternates, CTRL adds, SHIFT unselects.</p>
      <svg width="24" height="22" viewBox="0 0 24 22" className="shrink-0" fill="#e8f2fb" stroke="#2a78b8" strokeWidth="2"><path d="M1 1v15l5 3 5-3V1M6 1v16" /><path d="M17 1v17h4V1" stroke="#36558a" strokeWidth="1.500" /></svg>
      <select aria-label="Workset" className={`ml-2 ${hidden}`}><option></option></select>
      <svg width="14" height="20" viewBox="0 0 14 20" className="ml-[9px] shrink-0" fill="#909090"><path d="M5 0h4l1 10 3 4v5H1v-5l3-4z" /></svg>
      <span className="ml-[14px] w-10">:0</span>
      <svg width="23" height="22" viewBox="0 0 23 22" className="shrink-0" fill="#fff" stroke="#333" strokeWidth="2"><path d="M1 1h21v20H1zM6 13h3M11 13h6M11 17h6" /></svg>
      <svg width="22" height="22" viewBox="0 0 22 22" className="ml-3 shrink-0" fill="#ddd" stroke="#999" strokeWidth="2"><path d="M8 2h12v16H8zM0 16h10v-4" /></svg>
      <select aria-label="Design option" className={`ml-[9px] ${hidden}`}><option>Main Model</option></select>
      <div className="ml-auto flex items-center gap-[9px] pr-[85px]">
        <Tool label="Select links" className="w-6">
          <g stroke="#e0a110" strokeWidth="3"><ellipse cx="8" cy="7" rx="4.500" ry="3" /><ellipse cx="18" cy="7" rx="4.500" ry="3" /><path d="M7 7h12" strokeWidth="2" /></g>
          {arrow}
        </Tool>
        <Tool label="Select underlay" className="w-6">
          <g stroke="#3b82c4" strokeWidth="2" fill="#dcecf8"><path d="M12 3h12l-4 9H5zM4 13l-3 6h19" /><path d="M5 16h15" /></g>
          {arrow}
        </Tool>
        <Tool label="Select pinned" className="w-6">
          <path d="M3 2h14v3l-3 1v6l4 2v3H1v-3l4-2V6L3 5z" fill="#e2632a" stroke="#a8451a" strokeWidth="1" />
          <path d="M9 17v8" stroke="#844" /><path d="M6 8h7" stroke="#fff" />
          {arrow}
        </Tool>
        <Tool label="Select by face" className="w-6">
          <path d="M2 5l12-4v18L2 23z" fill="#9bcbee" stroke="#4587ba" strokeWidth="1.800" />
          {arrow}
        </Tool>
        <Tool label="Drag elements" className="w-6">
          <path d="M0 7h14M7 0v14M3 4L0 7l3 3M11 4l3 3-3 3M4 3l3-3 3 3M4 11l3 3 3-3" strokeWidth="1.500" stroke="#222" />
          <path d="M13 8v14l3-3 2 4 2-1-2-4h4z" fill="#fff" stroke="#222" strokeWidth="1.200" />
        </Tool>
        <Tool label="Background processes" className="w-6">
          <circle cx="13" cy="13" r="7" stroke="#999" strokeWidth="4" strokeDasharray="3.500 2" />
        </Tool>
        <button type="button" className="flex items-center text-[#444]">
          <svg width="24" height="24" viewBox="0 0 24 24" fill="#e3e3e6" stroke="#505050" strokeWidth="1.700"><path d="M1 2h21v3l-7 8v9h-5v-9L1 5z" /></svg>
          :7
        </button>
      </div>
    </footer>
  );
}

const hatch = 'bg-[#26313e] bg-[repeating-linear-gradient(45deg,transparent_0px,transparent_5px,#3b4953_5px,#3b4953_6px)]';

export default function App() {
  return (
    <div className="relative flex h-screen min-h-[1100px] w-full flex-col overflow-hidden bg-[#cccccc] font-['Open_Sans',sans-serif]">
      <TitleBar />
      <TabRow />
      <Ribbon />
      <OptionsBar />
      <div className="mt-[2px] flex min-h-0 flex-1">
        <Properties />
        <Center />
        <Browser />
      </div>
      <StatusBar />
      <div className={`absolute right-[617px] bottom-[13px] left-[303px] h-[122px] ${hatch}`} />
      <div className={`absolute top-[155px] right-[29px] h-[756px] w-[320px] border-2 border-[#15191e] shadow-lg ${hatch}`} />
    </div>
  );
}
